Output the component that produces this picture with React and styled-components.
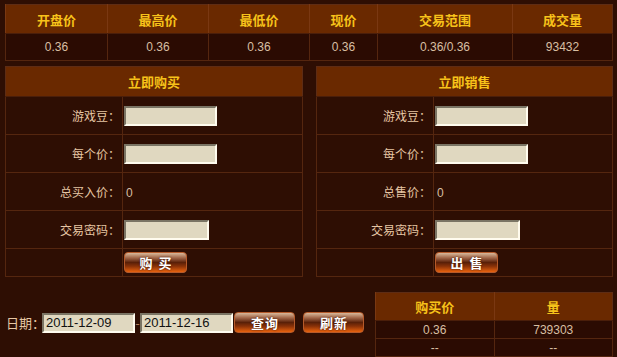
import React from "react";
import styled, { createGlobalStyle } from "styled-components";

const GlobalStyle = createGlobalStyle`
    html, body {
        margin: 0;
        padding: 0;
        background: #2e0e03;
    }
    body {
        font-family: "Liberation Sans", "Noto Sans CJK SC", sans-serif;
        font-size: 12px;
        color: #e6c6a4;
    }
`;

const Page = styled.div`
    width: 617px;
    height: 357px;
    overflow: hidden;
    padding: 4px 4px 0 5px;
    box-sizing: border-box;
    background: #2e0e03;
`;

const Grid = styled.table`
    border-collapse: collapse;
    width: ${({ $w }) => $w}px;
    border: 1px solid #5e2c14;
    table-layout: fixed;

    th {
        background: #6a2900;
        color: #f7c21a;
        font-family: "Noto Sans CJK SC", sans-serif;
        font-weight: 700;
        font-size: 13px;
        height: ${({ $head }) => $head}px;
        padding: 0;
        border-left: 1px solid #7a3812;
        border-bottom: 1px solid #4a1e0a;
    }

    td {
        background: #2b0b02;
        color: #d8bfa2;
        text-align: center;
        height: ${({ $row }) => $row}px;
        padding: 0;
        border: 1px solid #55260f;
    }
`;

const Panels = styled.div`
    display: flex;
    gap: 13px;
    margin-top: 5px;
`;

const Panel = styled.table`
    border-collapse: collapse;
    width: ${({ $w }) => $w}px;
    table-layout: fixed;
    border: 1px solid #5e2c14;

    th {
        background: #6a2900;
        color: #f7c21a;
        font-family: "Noto Sans CJK SC", sans-serif;
        font-weight: 700;
        font-size: 13px;
        height: 29px;
        padding: 0;
        border-bottom: 1px solid #4a1e0a;
    }

    td {
        border: 1px solid #55260f;
        padding: 0 0 0 1px;
        height: ${({ $row }) => $row}px;
        font-family: "Noto Sans CJK SC", "Liberation Sans", sans-serif;
        font-size: 12px;
        color: #e6c6a4;
    }

    td.label {
        text-align: right;
        padding: 0 2px 0 0;
    }

    td.btn {
        height: 27px;
    }
`;

const Field = styled.input`
    box-sizing: border-box;
    width: ${({ $w }) => $w || 93}px;
    height: 20px;
    background: #e0d8c0;
    border: 2px solid;
    border-color: #7a7464 #fffbee #fffbee #7a7464;
    font-family: "Liberation Sans", sans-serif;
    font-size: 13px;
    color: #111;
    padding: 0 2px;
    vertical-align: middle;
`;

const Value = styled.span`
    font-family: "Liberation Sans", sans-serif;
    color: #d8bfa2;
    padding-left: 2px;
`;

const Button = styled.button`
    width: ${({ $w }) => $w || 63}px;
    height: 21px;
    padding: 0;
    border: 1px solid #b65a2a;
    border-radius: 4px;
    background: linear-gradient(
        to bottom,
        #d8b89a 0%,
        #a2684a 25%,
        #5a2008 50%,
        #8a3208 70%,
        #e8620e 100%
    );
    color: #fff;
    font-family: "Noto Sans CJK SC", sans-serif;
    font-weight: 700;
    font-size: 13px;
    letter-spacing: ${({ $spaced }) => ($spaced ? "6px" : "1px")};
    text-indent: ${({ $spaced }) => ($spaced ? "6px" : "1px")};
    text-shadow: 0 0 2px #3a1000;
    line-height: 19px;
    vertical-align: middle;
`;

const Bottom = styled.div`
    display: flex;
    justify-content: space-between;
    align-items: flex-start;
    margin-top: 15px;
`;

const DateBar = styled.div`
    display: flex;
    align-items: center;
    margin-top: 20px;
    margin-left: 1px;
    font-family: "Noto Sans CJK SC", sans-serif;
    font-size: 13px;
    color: #e6c6a4;

    .sep {
        width: 5px;
        text-align: center;
        color: #b08060;
    }
`;

const DateLabel = styled.span`
    width: 36px;
    flex-shrink: 0;
    white-space: nowrap;
`;

const Buttons = styled.div`
    display: flex;
    gap: 8px;
    margin-left: 1px;
`;

const PriceCols = ["开盘价", "最高价", "最低价", "现价", "交易范围", "成交量"];
const PriceWidths = [102, 101, 101, 68, 135, 100];
const PriceVals = ["0.36", "0.36", "0.36", "0.36", "0.36/0.36", "93432"];

const TradePanel = ({ title, w, totalLabel, action }) => (
    <Panel $w={w} $row={37}>
        <colgroup>
            <col style={{ width: 117 }} />
            <col />
        </colgroup>
        <thead>
            <tr>
                <th colSpan={2}>{title}</th>
            </tr>
        </thead>
        <tbody>
            <tr>
                <td className="label">游戏豆：</td>
                <td><Field $w={93} /></td>
            </tr>
            <tr>
                <td className="label">每个价：</td>
                <td><Field $w={93} /></td>
            </tr>
            <tr>
                <td className="label">{totalLabel}</td>
                <td><Value>0</Value></td>
            </tr>
            <tr>
                <td className="label">交易密码：</td>
                <td><Field $w={85} type="password" /></td>
            </tr>
            <tr>
                <td className="btn"></td>
                <td className="btn"><Button $spaced>{action}</Button></td>
            </tr>
        </tbody>
    </Panel>
);

const App = () => {
    return (
        <Page>
            <GlobalStyle />
            <Grid $w={608} $head={28} $row={26}>
                <colgroup>
                    {PriceWidths.map((w, i) => <col key={i} style={{ width: w }} />)}
                </colgroup>
                <thead>
                    <tr>
                        {PriceCols.map((c) => <th key={c}>{c}</th>)}
                    </tr>
                </thead>
                <tbody>
                    <tr>
                        {PriceVals.map((v, i) => <td key={i}>{v}</td>)}
                    </tr>
                </tbody>
            </Grid>

            <Panels>
                <TradePanel title="立即购买" w={298} totalLabel="总买入价：" action="购买" />
                <TradePanel title="立即销售" w={297} totalLabel="总售价：" action="出售" />
            </Panels>

            <Bottom>
                <DateBar>
                    <DateLabel>日期：</DateLabel>
                    <Field $w={93} defaultValue="2011-12-09" />
                    <span className="sep">-</span>
                    <Field $w={93} defaultValue="2011-12-16" />
                    <Buttons>
                        <Button $w={61}>查询</Button>
                        <Button $w={61}>刷新</Button>
                    </Buttons>
                </DateBar>
                <Grid $w={238} $head={27} $row={17}>
                    <thead>
                        <tr>
                            <th>购买价</th>
                            <th>量</th>
                        </tr>
                    </thead>
                    <tbody>
                        <tr>
                            <td>0.36</td>
                            <td>739303</td>
                        </tr>
                        <tr>
                            <td>--</td>
                            <td>--</td>
                        </tr>
                    </tbody>
                </Grid>
            </Bottom>
        </Page>
    );
};

export default App;
